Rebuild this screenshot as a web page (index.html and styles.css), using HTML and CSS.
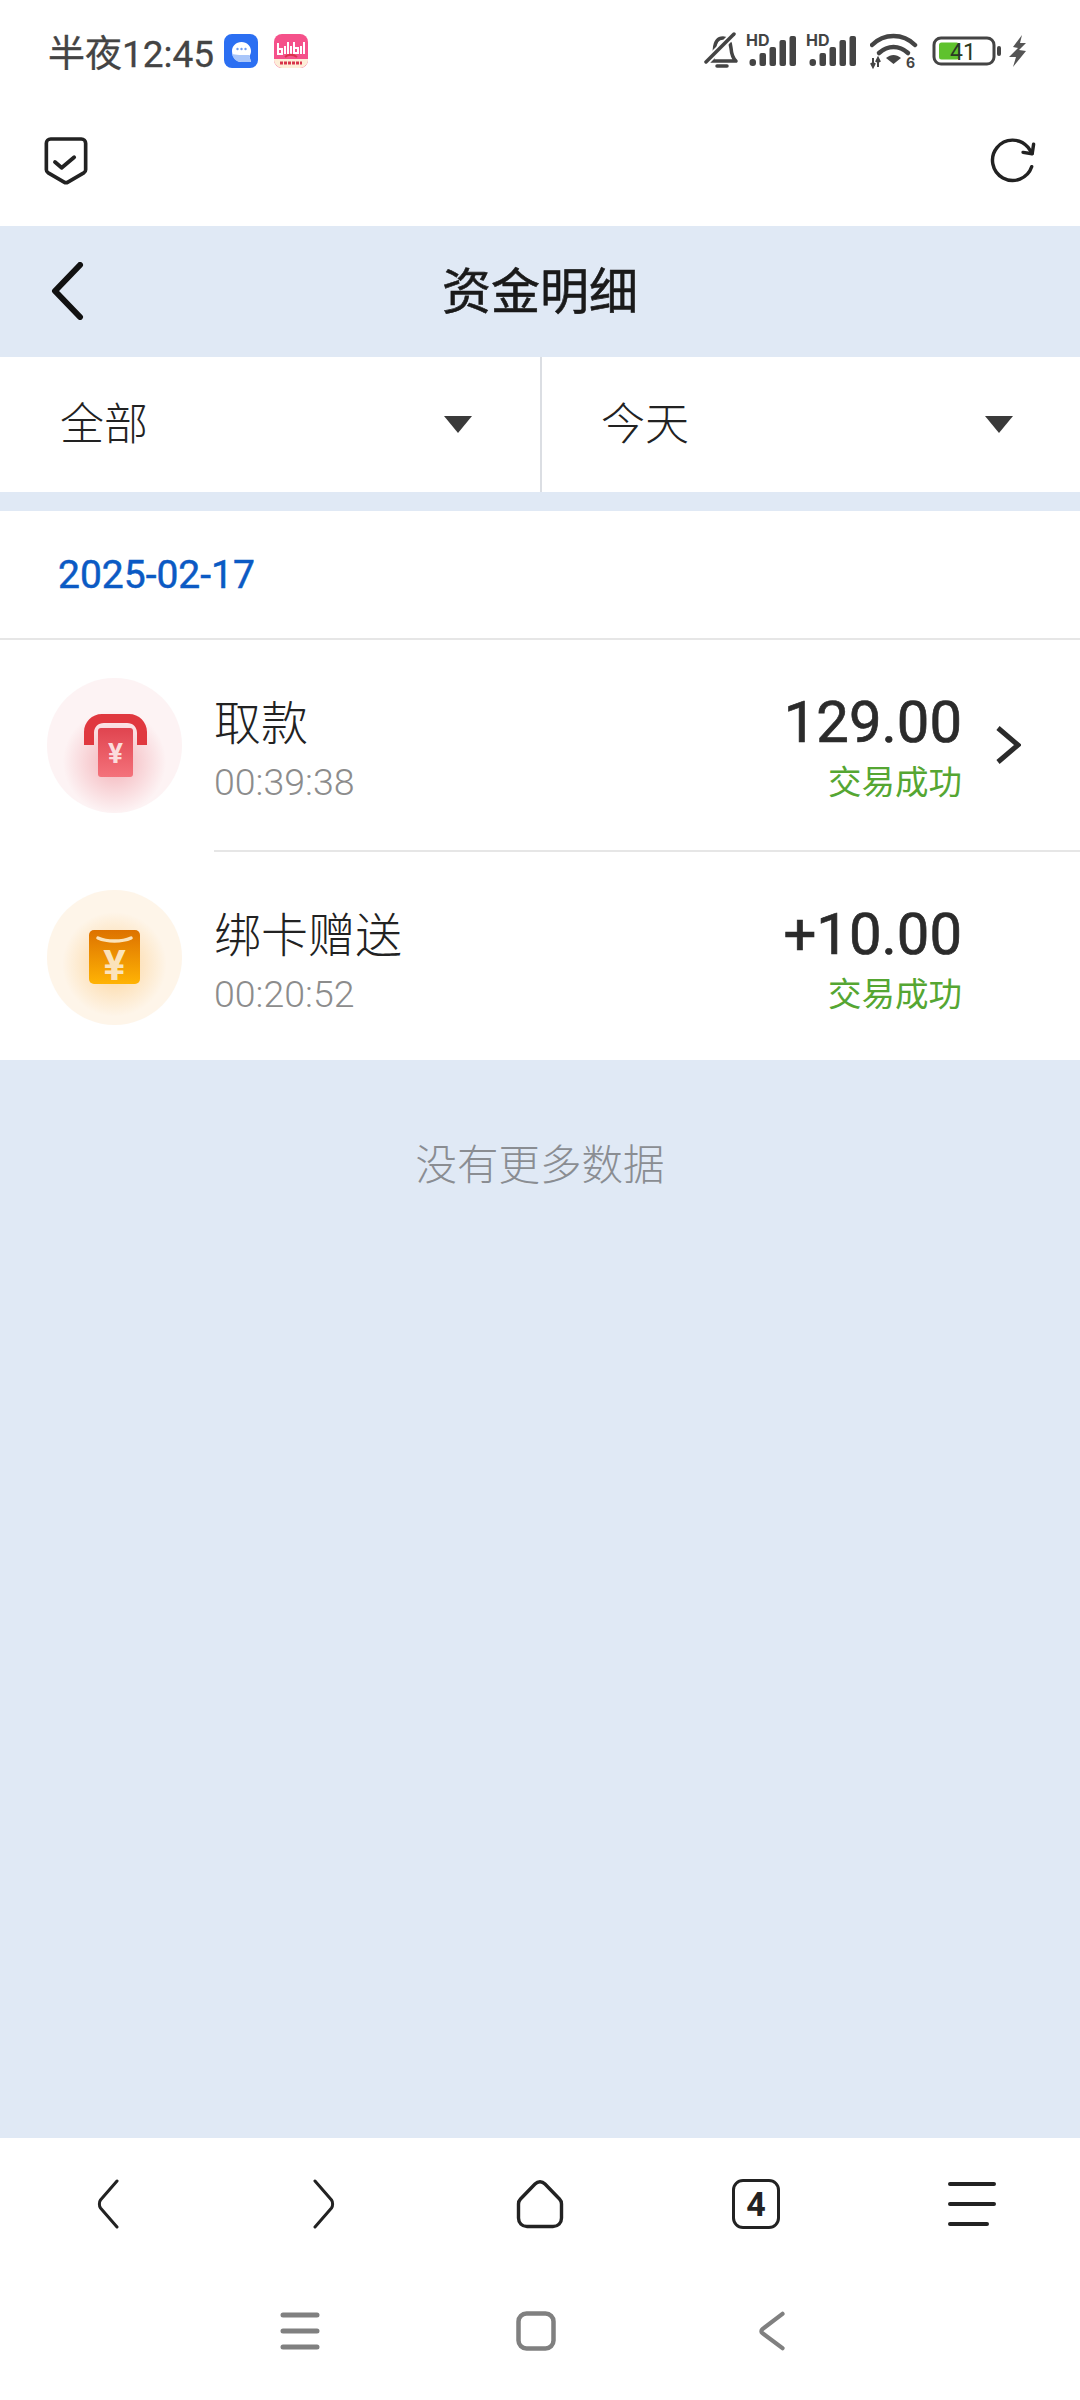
FILE: index.html

```html
<!DOCTYPE html>
<html>
<head>
  <meta charset="utf-8">
  <link rel="stylesheet" href="styles.css">
</head>
<body>
  <div class="screen">
    <div class="status-bar">
      <div class="status-left">
        <span class="clock">半夜12:45</span>
        <svg class="app-icon" viewBox="0 0 34 34">
          <rect width="34" height="34" rx="8" fill="#2b6ff2"/>
          <path d="M8 17c0-5 4-9 9.500-9S27 12 27 17c0 2-.6 3.800-1.600 5L27 28h-9.500C12 28 8 23 8 17z" fill="#fff"/>
          <path d="M8 20c3 1 11 1 17 1l2 7h-9.500C13 28 9 25 8 20z" fill="#a9c6fa"/>
          <circle cx="13.500" cy="15" r="1.200" fill="#6f9cf2"/>
          <circle cx="17.500" cy="15" r="1.200" fill="#6f9cf2"/>
          <circle cx="21.500" cy="15" r="1.200" fill="#6f9cf2"/>
        </svg>
        <svg class="app-icon app-icon-gap" viewBox="0 0 34 34">
          <rect width="34" height="34" rx="8" fill="#f5518a"/>
          <path d="M0 25h34v1c0 4-4 8-8 8H8c-4 0-8-4-8-8z" fill="#fdeed8"/>
          <path d="M4 9v11h4v-5H5M11 12v8M14 8v12M17 12v8M20 8v11h4v-5h-3M27 12v8M30 8v12" fill="none" stroke="#fff" stroke-width="2"/>
          <path d="M6 29h22" stroke="#d8344a" stroke-width="3" stroke-dasharray="3 1"/>
          <path d="M11 23c3-3 8-3 12 0" fill="none" stroke="#d8344a" stroke-width="2"/>
        </svg>
      </div>
      <div class="status-right">
        <svg class="st-bell" viewBox="0 0 36 38">
          <path d="M7 29c3-3 3-6 3.500-12C11 10 14 6 19 6c5 0 7.500 4 8 10 .5 6 1.500 10 5 13H7z" fill="none" stroke="#444" stroke-width="3.500" stroke-linejoin="round"/>
          <path d="M13 34h10" stroke="#444" stroke-width="3.500" stroke-linecap="round"/>
          <path d="M2 30L30 2" stroke="#fff" stroke-width="7"/>
          <path d="M2 30L30 2" stroke="#444" stroke-width="3.500" stroke-linecap="round"/>
        </svg>
        <svg class="st-signal" viewBox="0 -6 50 46">
          <text x="0" y="12" class="st-hd">HD</text>
          <rect x="3.500" y="25" width="6.500" height="7" rx="3" fill="#444"/>
          <rect x="13.500" y="19" width="6.500" height="13" rx="2" fill="#444"/>
          <rect x="23.500" y="13" width="6.500" height="19" rx="2" fill="#444"/>
          <rect x="33.500" y="6" width="6.500" height="26" rx="2" fill="#444"/>
          <rect x="43.500" y="2" width="6.500" height="30" rx="2" fill="#444"/>
        </svg>
        <svg class="st-signal" viewBox="0 -6 50 46">
          <text x="0" y="12" class="st-hd">HD</text>
          <rect x="3.500" y="25" width="6.500" height="7" rx="3" fill="#444"/>
          <rect x="13.500" y="19" width="6.500" height="13" rx="2" fill="#444"/>
          <rect x="23.500" y="13" width="6.500" height="19" rx="2" fill="#444"/>
          <rect x="33.500" y="6" width="6.500" height="26" rx="2" fill="#444"/>
          <rect x="43.500" y="2" width="6.500" height="30" rx="2" fill="#444"/>
        </svg>
        <svg class="st-wifi" viewBox="0 -6 48 48">
          <path d="M2 12C14 0 33 0 45 12" fill="none" stroke="#444" stroke-width="4.500" stroke-linecap="round"/>
          <path d="M9 20c9-8 20-8 29 0" fill="none" stroke="#444" stroke-width="4.500" stroke-linecap="round"/>
          <path d="M16 25c5-4 10-4 15 0l-7.500 6z" fill="#444"/>
          <path d="M3 25v9M1 30l2 4 2-4M8 34v-9M6 29l2-4 2 4" fill="none" stroke="#444" stroke-width="2"/>
          <text x="36" y="35" class="st-six">6</text>
        </svg>
        <svg class="st-battery" viewBox="0 0 70 30">
          <rect x="2" y="2" width="60" height="26" rx="7" fill="none" stroke="#444" stroke-width="3"/>
          <rect x="7" y="6.500" width="20" height="17" rx="2.500" fill="#5fc22d"/>
          <rect x="65" y="10" width="4" height="10" rx="2" fill="#444"/>
          <text x="31" y="23.500" text-anchor="middle" class="st-level">41</text>
        </svg>
        <svg class="st-bolt" viewBox="0 0 18 32">
          <path d="M13 0L4 12l5 1-9 9h7L4 32l13-16-7-1 7-7h-6z" fill="#555"/>
        </svg>
      </div>
    </div>

    <div class="toolbar">
      <svg class="tool-icon" viewBox="0 0 48 50">
        <path d="M8 2h32c2.500 0 4.500 2 4.500 4.500V34c0 1.500-.7 2.600-2 3.400L26 47c-1.300.8-2.700.8-4 0L5.500 37.400c-1.300-.8-2-1.900-2-3.400V6.500C3.500 4 5.500 2 8 2z" fill="none" stroke="#222" stroke-width="3.800"/>
        <path d="M12.500 26l7 6 13-11" fill="none" stroke="#222" stroke-width="4" stroke-linecap="round" stroke-linejoin="round"/>
      </svg>
      <svg class="tool-icon" viewBox="0 0 48 48">
        <path d="M43.500 30A21 21 0 1 1 39.500 9.500L44 16" fill="none" stroke="#222" stroke-width="3.600" stroke-linecap="round"/>
        <path d="M45.500 6.500L44 16.500 34.500 15" fill="none" stroke="#222" stroke-width="3.600" stroke-linecap="round" stroke-linejoin="round"/>
      </svg>
    </div>

    <div class="title-bar">
      <svg class="title-back" viewBox="0 0 34 58">
        <path d="M30 3L5 29l25 26" fill="none" stroke="#111" stroke-width="6" stroke-linecap="round" stroke-linejoin="round"/>
      </svg>
      <h1 class="page-title">资金明细</h1>
    </div>

    <div class="filters">
      <div class="filter">
        <span class="filter-label">全部</span>
        <i class="caret"></i>
      </div>
      <div class="filter">
        <span class="filter-label">今天</span>
        <i class="caret"></i>
      </div>
    </div>

    <div class="list">
      <div class="list-date">2025-02-17</div>

      <div class="tx">
        <div class="tx-icon tx-icon-red">
          <svg viewBox="0 0 135 135">
            <defs>
              <linearGradient id="cardRed" x1="0" y1="0" x2="0" y2="1">
                <stop offset="0" stop-color="#e0444f"/>
                <stop offset="1" stop-color="#f4727b"/>
              </linearGradient>
            </defs>
            <path d="M37 67V54c0-10 8-18 18-18h27c10 0 18 8 18 18v13H90V55c0-6-4-10-10-10H57c-6 0-10 4-10 10v12z" fill="#e0383f"/>
            <rect x="51" y="50" width="35" height="49" rx="3" fill="url(#cardRed)"/>
            <text x="68.500" y="85" text-anchor="middle" class="yen yen-small">¥</text>
          </svg>
        </div>
        <div class="tx-body">
          <div class="tx-main">
            <div class="tx-name">取款</div>
            <div class="tx-time">00:39:38</div>
          </div>
          <div class="tx-side">
            <div class="tx-amount">129.00</div>
            <div class="tx-state">交易成功</div>
          </div>
          <div class="tx-more">
            <svg class="tx-chevron" viewBox="0 0 26 40">
              <path d="M3 3l20 17L3 37" fill="none" stroke="#2b2b2b" stroke-width="5"/>
            </svg>
          </div>
        </div>
      </div>

      <div class="tx tx-last">
        <div class="tx-icon tx-icon-orange">
          <svg viewBox="0 0 135 135">
            <defs>
              <linearGradient id="cardOrange" x1="0" y1="0" x2="0" y2="1">
                <stop offset="0" stop-color="#dd7200"/>
                <stop offset="1" stop-color="#ffb304"/>
              </linearGradient>
            </defs>
            <rect x="42" y="40" width="51" height="54" rx="5" fill="url(#cardOrange)"/>
            <path d="M51 48c9 4 24 4 33 0" fill="none" stroke="#fbe3bb" stroke-width="3.500" stroke-linecap="round"/>
            <text x="67.500" y="90" text-anchor="middle" class="yen yen-large">¥</text>
          </svg>
        </div>
        <div class="tx-body tx-body-last">
          <div class="tx-main">
            <div class="tx-name">绑卡赠送</div>
            <div class="tx-time">00:20:52</div>
          </div>
          <div class="tx-side">
            <div class="tx-amount">+10.00</div>
            <div class="tx-state">交易成功</div>
          </div>
          <div class="tx-more"></div>
        </div>
      </div>
    </div>

    <div class="list-end">没有更多数据</div>

    <div class="browser-nav">
      <svg class="nav-icon" viewBox="0 0 24 50">
        <path d="M21 2L4.500 21c-1.500 2-1.500 6 0 8L21 48" fill="none" stroke="#222" stroke-width="3" stroke-linecap="round"/>
      </svg>
      <svg class="nav-icon" viewBox="0 0 24 50">
        <path d="M3 2l16.500 19c1.500 2 1.500 6 0 8L3 48" fill="none" stroke="#222" stroke-width="3" stroke-linecap="round"/>
      </svg>
      <svg class="nav-icon nav-icon-wide" viewBox="0 0 48 50">
        <path d="M19 5L4.500 20C3 21.500 2.500 23 2.500 25v14c0 5 3.500 8.500 8.500 8.500h26c5 0 8.500-3.500 8.500-8.500V25c0-2-.5-3.500-2-5L29 5c-3-3-7-3-10 0z" fill="none" stroke="#222" stroke-width="3.400"/>
      </svg>
      <div class="tab-count">4</div>
      <svg class="nav-icon nav-icon-wide" viewBox="0 0 48 50">
        <path d="M2 5h44M2 25h44M2 45h37" fill="none" stroke="#222" stroke-width="4" stroke-linecap="round"/>
      </svg>
    </div>

    <div class="gesture-bar">
      <svg class="gesture-icon" viewBox="0 0 40 40">
        <path d="M3 4h34M3 20h34M3 36h34" fill="none" stroke="#808080" stroke-width="5" stroke-linecap="round"/>
      </svg>
      <svg class="gesture-icon" viewBox="0 0 40 40">
        <rect x="2.500" y="2.500" width="35" height="35" rx="8" fill="none" stroke="#808080" stroke-width="4.500"/>
      </svg>
      <svg class="gesture-icon" viewBox="0 0 30 42">
        <path d="M26 3L5 19c-1.500 1.300-1.500 3 0 4.300L26 39" fill="none" stroke="#808080" stroke-width="4.500" stroke-linecap="round"/>
      </svg>
    </div>
  </div>
</body>
</html>
```

FILE: styles.css

```css
* {
  box-sizing: border-box;
}
html, body {
  margin: 0;
  padding: 0;
}
body {
  width: 1080px;
  height: 2400px;
  overflow: hidden;
  font-family: Roboto, "Noto Sans CJK SC", sans-serif;
  color: #2b2b2b;
}
svg {
  display: block;
}
.screen {
  display: flex;
  flex-direction: column;
  height: 2400px;
  background: #e0e9f5;
}

/* status bar */
.status-bar {
  display: flex;
  justify-content: space-between;
  align-items: center;
  height: 100px;
  padding: 2px 53px 0 48px;
  background: #fff;
}
.status-left {
  display: flex;
  align-items: center;
}
.clock {
  font-size: 37px;
  -webkit-text-stroke: 0.3px #444;
  color: #444;
  width: 176px;
  white-space: nowrap;
}
.app-icon {
  width: 34px;
  height: 34px;
}
.app-icon-gap {
  margin-left: 16px;
}
.status-right {
  display: flex;
  align-items: center;
}
.st-bell {
  width: 36px;
  height: 38px;
  margin-right: 6px;
}
.st-signal {
  width: 50px;
  height: 46px;
  margin-right: 10px;
}
.st-hd {
  font: 700 16px Inter, sans-serif;
  fill: #444;
}
.st-wifi {
  width: 48px;
  height: 48px;
  margin: 0 14px 0 4px;
}
.st-six {
  font: 700 14px Inter, sans-serif;
  fill: #444;
}
.st-battery {
  width: 70px;
  height: 30px;
  margin-right: 7px;
}
.st-level {
  font: 400 23px Roboto, sans-serif;
  fill: #2a3a22;
}
.st-bolt {
  width: 18px;
  height: 32px;
}

/* browser toolbar */
.toolbar {
  display: flex;
  justify-content: space-between;
  align-items: center;
  height: 126px;
  padding: 0 44px 4px 43px;
  background: #fff;
}
.tool-icon {
  width: 46px;
  height: 48px;
}

/* page title */
.title-bar {
  display: flex;
  justify-content: center;
  align-items: center;
  position: relative;
  height: 131px;
  padding-bottom: 8px;
}
.title-back {
  position: absolute;
  left: 50px;
  top: 36px;
  width: 34px;
  height: 58px;
}
.page-title {
  margin: 0;
  font-size: 49px;
  font-weight: 400;
  -webkit-text-stroke: 0.6px #1a1a1a;
  color: #1a1a1a;
}

/* filter row */
.filters {
  display: flex;
  height: 135px;
  margin-bottom: 19px;
  background: #fff;
}
.filter {
  display: flex;
  justify-content: space-between;
  align-items: center;
  width: 50%;
  padding: 0 68px 0 60px;
  font-size: 44px;
  font-weight: 300;
  color: #222;
}
.filter + .filter {
  padding: 0 67px 0 59px;
  border-left: 2px solid #dbdee3;
}
.filter-label {
  padding-bottom: 8px;
}
.caret {
  width: 0;
  height: 0;
  border-left: 14px solid transparent;
  border-right: 14px solid transparent;
  border-top: 17px solid #3a3a3a;
}

/* transactions */
.list {
  background: #fff;
}
.list-date {
  height: 129px;
  padding-top: 40px;
  padding-left: 58px;
  font-size: 39px;
  font-weight: 400;
  -webkit-text-stroke: 0.5px #0b5ac4;
  line-height: 48px;
  color: #0b5ac4;
  border-bottom: 2px solid #e6e6e6;
}
.tx {
  display: flex;
  height: 212px;
  padding-left: 47px;
}
.tx-last {
  height: 208px;
}
.tx-icon {
  flex: none;
  width: 135px;
  height: 135px;
  margin-top: 38px;
  margin-right: 32px;
  border-radius: 50%;
}
.tx-icon-red {
  background: radial-gradient(circle at 50% 62%, rgba(226, 70, 84, 0.38) 0, rgba(226, 70, 84, 0) 48%), #fdf3f4;
}
.tx-icon-orange {
  background: radial-gradient(circle at 50% 55%, rgba(250, 165, 40, 0.42) 0, rgba(250, 165, 40, 0) 52%), #fef5e9;
}
.yen {
  font-family: Roboto, sans-serif;
  font-weight: 700;
}
.yen-small {
  font-size: 28px;
  fill: #fbdcdc;
}
.yen-large {
  font-size: 42px;
  fill: #fbe3bb;
}
.tx-body {
  display: flex;
  flex: 1;
  padding-top: 20px;
  border-bottom: 2px solid #e6e6e6;
}
.tx-body-last {
  border-bottom: none;
}
.tx-main {
  flex: 1;
  padding-top: 33px;
}
.tx-name {
  font-size: 47px;
  font-weight: 300;
  line-height: 62px;
  color: #222;
}
.tx-time {
  font-size: 37.500px;
  font-weight: 300;
  line-height: 52px;
  color: #8c8c8c;
  margin-top: 1px;
}
.tx-side {
  padding-top: 25px;
  text-align: right;
}
.tx-amount {
  font-size: 58px;
  font-weight: 400;
  -webkit-text-stroke: 0.7px #2b2b2b;
  line-height: 74px;
  color: #2b2b2b;
}
.tx-state {
  font-size: 33.500px;
  font-weight: 400;
  line-height: 46px;
  margin-top: 1px;
  color: #55a632;
}
.tx-more {
  flex: none;
  width: 118px;
  padding: 65px 0 0 33px;
}
.tx-chevron {
  width: 26px;
  height: 40px;
}

.list-end {
  flex: 1;
  padding-top: 78px;
  font-size: 41.500px;
  font-weight: 300;
  line-height: 56px;
  text-align: center;
  color: #8a8d92;
}

/* browser nav */
.browser-nav {
  display: grid;
  grid-template-columns: repeat(5, 216px);
  justify-items: center;
  align-items: center;
  height: 132px;
  background: #fff;
}
.nav-icon {
  width: 24px;
  height: 50px;
}
.nav-icon-wide {
  width: 48px;
}
.tab-count {
  display: flex;
  justify-content: center;
  align-items: center;
  width: 48px;
  height: 50px;
  font-size: 34px;
  font-weight: 700;
  color: #222;
  border: 3.500px solid #222;
  border-radius: 11px;
}

/* android nav */
.gesture-bar {
  display: grid;
  grid-template-columns: repeat(3, 236px);
  justify-content: center;
  justify-items: center;
  align-items: center;
  height: 130px;
  padding: 0 8px 8px 0;
  background: #fff;
}
.gesture-icon {
  width: 40px;
  height: 40px;
}
```
